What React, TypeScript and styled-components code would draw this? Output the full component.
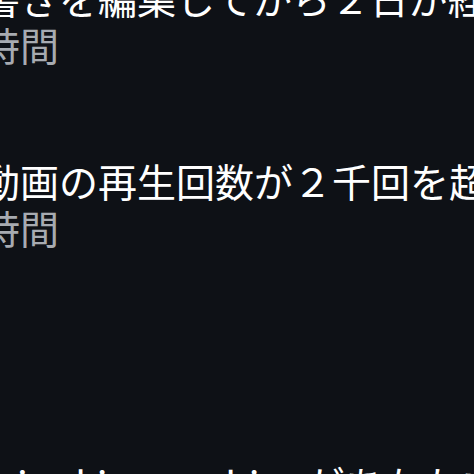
import React from "react";
import styled, { createGlobalStyle } from "styled-components";

const Global = createGlobalStyle`
  html, body {
    margin: 0;
    padding: 0;
    background: #0e1116;
  }
  body {
    font-family: "Noto Sans CJK JP", "Noto Sans", sans-serif;
  }
`;

const Screen = styled.div`
  width: 474px;
  height: 474px;
  overflow: hidden;
  background: #0e1116;
`;

const List = styled.ul`
  list-style: none;
  margin: -26px 0 0 -19px;
  padding: 0;
  display: flex;
  flex-direction: column;
`;

const Item = styled.li<{ $after: number }>`
  display: flex;
  flex-direction: column;
  padding-bottom: ${(p) => p.$after}px;
`;

const Title = styled.div`
  color: #ffffff;
  font-size: 39px;
  line-height: 47px;
  white-space: nowrap;
`;

const Time = styled.div`
  color: #a7abb1;
  font-size: 39px;
  line-height: 47px;
  white-space: nowrap;
`;

const items = [
  { title: "書きを編集してから２日が経ちました", time: "時間", after: 89 },
  { title: "動画の再生回数が２千回を超えました", time: "時間", after: 209 },
  { title: "minoki_murahinaがあなたをフォローしました", time: "時間", after: 0 },
];

export default function App() {
  return (
    <Screen>
      <Global />
      <List>
        {items.map((it, i) => (
          <Item key={i} $after={it.after}>
            <Title>{it.title}</Title>
            <Time>{it.time}</Time>
          </Item>
        ))}
      </List>
    </Screen>
  );
}
